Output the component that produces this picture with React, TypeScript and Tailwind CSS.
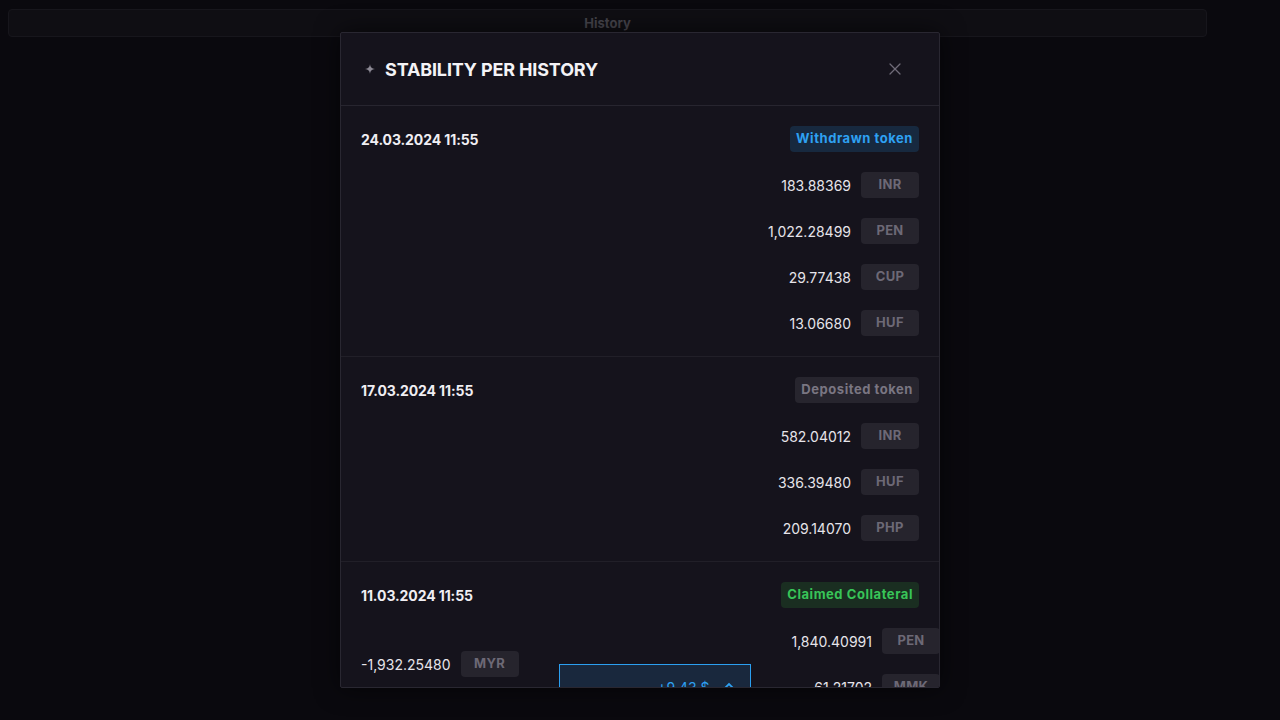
import { X } from "lucide-react";

type Row = { amount: string; code: string };

type Entry = {
  date: string;
  label: string;
  tone: "blue" | "gray" | "green";
  rows: Row[];
};

const ENTRIES: Entry[] = [
  {
    date: "24.03.2024 11:55",
    label: "Withdrawn token",
    tone: "blue",
    rows: [
      { amount: "183.88369", code: "INR" },
      { amount: "1,022.28499", code: "PEN" },
      { amount: "29.77438", code: "CUP" },
      { amount: "13.06680", code: "HUF" },
    ],
  },
  {
    date: "17.03.2024 11:55",
    label: "Deposited token",
    tone: "gray",
    rows: [
      { amount: "582.04012", code: "INR" },
      { amount: "336.39480", code: "HUF" },
      { amount: "209.14070", code: "PHP" },
    ],
  },
];

const TONES = {
  blue: "bg-[#17293f] text-[#2ea1f2]",
  gray: "bg-[#27252e] text-[#7a7682]",
  green: "bg-[#1a2e21] text-[#38c558]",
};

function Badge({ label, tone }: { label: string; tone: Entry["tone"] }) {
  return (
    <span className={`h-[26px] px-[6px] rounded-[4px] flex items-center text-[13px] font-bold tracking-[0.55px] ${TONES[tone]}`}>
      {label}
    </span>
  );
}

function Amount({ amount, code }: Row) {
  return (
    <div className="flex items-center gap-[10px]">
      <span className="text-[14px] text-[#e6e4ea]">{amount}</span>
      <span className="w-[58px] h-[26px] rounded-[4px] bg-[#26242d] text-[#6d6976] text-[13px] font-bold tracking-[0.3px] flex items-center justify-center">
        {code}
      </span>
    </div>
  );
}

function Sparkle() {
  return (
    <svg width="10" height="10" viewBox="0 0 10 10" className="text-[#8c8994]">
      <path d="M5 0 C5.4 3.3 6.7 4.6 10 5 C6.7 5.4 5.4 6.7 5 10 C4.6 6.7 3.3 5.4 0 5 C3.3 4.6 4.6 3.3 5 0 Z" fill="currentColor" />
    </svg>
  );
}

export default function App() {
  return (
    <div className="relative h-[720px] overflow-hidden bg-[#0a090e] font-['Inter',sans-serif]">
      <div className="pt-[9px] pl-2">
        <div className="w-[1199px] h-[28px] pt-[2px] rounded-[4px] border border-[#17161c] bg-[#0f0e13] flex items-center justify-center text-[13px] font-bold text-[#46444c]">
          History
        </div>
      </div>

      {/* modal */}
      <div className="absolute left-[340px] top-[32px] w-[600px] h-[656px] flex flex-col overflow-hidden bg-[#15131c] border border-[#292731] rounded-[2px] shadow-[0_0_24px_rgba(0,0,0,0.6)]">
        <div className="h-[73px] shrink-0 flex items-center pl-6 pr-6 border-b border-[#27252f]">
          <Sparkle />
          <h2 className="ml-[10px] text-[18px] font-bold tracking-[-0.15px] text-[#f4f3f6] uppercase">
            Stability per history
          </h2>
          <button className="ml-auto w-10 h-10 flex items-center justify-center text-[#6f6c78]">
            <X size={20} strokeWidth={1.5} />
          </button>
        </div>

        <div className="flex-1 overflow-hidden">
          {ENTRIES.map((e) => (
            <div key={e.date} className="p-5 border-b border-[#211f28]">
              <div className="flex items-center justify-between">
                <span className="text-[14px] font-bold text-[#f0eef3] tracking-[-0.1px]">{e.date}</span>
                <Badge label={e.label} tone={e.tone} />
              </div>
              <div className="mt-5 flex flex-col items-end gap-5">
                {e.rows.map((r) => (
                  <Amount key={r.code} {...r} />
                ))}
              </div>
            </div>
          ))}

          <div className="p-5">
            <div className="flex items-center justify-between">
              <span className="text-[14px] font-bold text-[#f0eef3] tracking-[-0.1px]">11.03.2024 11:55</span>
              <Badge label="Claimed Collateral" tone="green" />
            </div>
            <div className="mt-5 -mr-[21px] flex items-start">
              <div className="mt-[23px]">
                <Amount amount="-1,932.25480" code="MYR" />
              </div>
              <div className="ml-[40px] mt-[36px] w-[192px] h-[44px] border border-[#2b9ff0] bg-[#19283d] flex items-start justify-end pt-[12px] pr-[16px] gap-[14px] text-[#2ea1f2] text-[14px]">
                <span>+9.43 $</span>
                <svg width="10" height="10" viewBox="0 0 10 10" className="mt-[4px]">
                  <path d="M1 7 L5 3 L9 7" stroke="currentColor" strokeWidth="1.8" fill="none" />
                </svg>
              </div>
              <div className="ml-auto flex flex-col items-end gap-5">
                <Amount amount="1,840.40991" code="PEN" />
                <Amount amount="61.21702" code="MMK" />
              </div>
            </div>
          </div>
        </div>
      </div>
    </div>
  );
}
